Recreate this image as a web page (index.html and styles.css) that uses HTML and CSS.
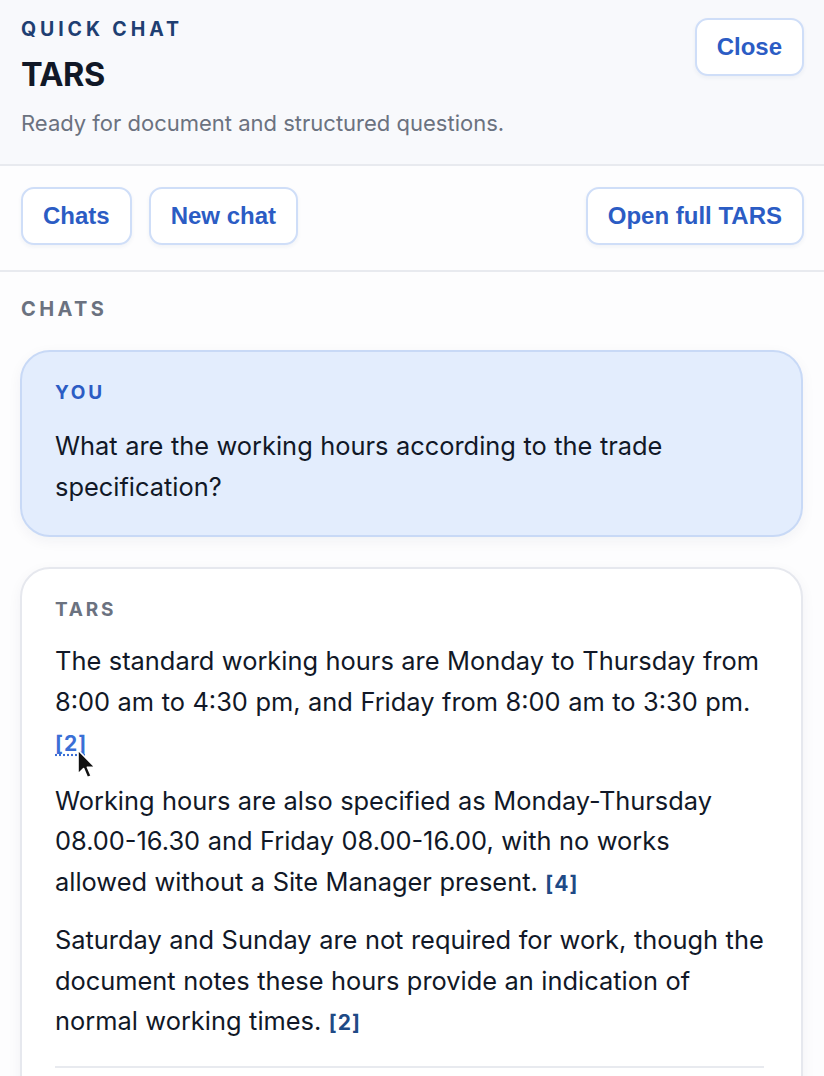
FILE: index.html
```html
<!DOCTYPE html>
<html lang="en">
<head>
    <meta charset="UTF-8">
    <meta name="viewport" content="width=device-width, initial-scale=1.0">
    <title>Quick chat - TARS</title>
    <link rel="stylesheet" href="styles.css">
</head>
<body>
    <div class="panel">
        <div class="header">
            <div class="header-text">
                <div class="eyebrow">Quick chat</div>
                <h1 class="title">TARS</h1>
                <p class="subtitle">Ready for document and structured questions.</p>
            </div>
            <button class="btn">Close</button>
        </div>
        <div class="toolbar">
            <button class="btn">Chats</button>
            <button class="btn">New chat</button>
            <button class="btn push-right">Open full TARS</button>
        </div>
        <div class="chats">
            <div class="section-label">Chats</div>
            <div class="message user">
                <div class="msg-label">You</div>
                <p>What are the working hours according to the trade specification?</p>
            </div>
            <div class="message bot">
                <div class="msg-label">Tars</div>
                <p class="has-cursor">The standard working hours are Monday to Thursday from 8:00 am to 4:30 pm, and Friday from 8:00 am to 3:30 pm.<br><a class="cite hovered" href="#">[2]</a>
                    <!-- mouse pointer over the hovered citation -->
                    <svg class="cursor" width="22" height="32" viewBox="0 0 22 32"><path d="M2 1 L2 25 L7.6 19.6 L11.4 28.6 L15.2 27 L11.4 18.2 L19 18.2 Z" fill="#111" stroke="#fff" stroke-width="1.6" stroke-linejoin="round"/></svg>
                </p>
                <p>Working hours are also specified as Monday-Thursday 08.00-16.30 and Friday 08.00-16.00, with no works allowed without a Site Manager present. <a class="cite" href="#">[4]</a></p>
                <p>Saturday and Sunday are not required for work, though the document notes these hours provide an indication of normal working times. <a class="cite" href="#">[2]</a></p>
                <div class="msg-rule"></div>
            </div>
        </div>
    </div>
</body>
</html>
```

FILE: styles.css
```css
body {
    margin: 0;
    padding: 0;
    font-family: 'Inter', 'Noto Sans', sans-serif;
    color: #111827;
    background: #fdfdfe;
}
.panel {
    width: 824px;
    height: 1076px;
    overflow: hidden;
}
.header {
    display: flex;
    justify-content: space-between;
    align-items: flex-start;
    padding: 17px 20px 0 21px;
    height: 147px;
    background: #f8f9fc;
    border-bottom: 2px solid #e8eaef;
}
.header .btn {
    margin-top: 1px;
}
.eyebrow {
    font-size: 19.5px;
    line-height: 24px;
    font-weight: 700;
    letter-spacing: 3.9px;
    text-transform: uppercase;
    color: #1f3f72;
}
.title {
    margin: 14px 0 0;
    font-size: 32.5px;
    line-height: 40px;
    font-weight: 700;
    color: #111827;
    letter-spacing: -0.5px;
}
.subtitle {
    margin: 15px 0 0;
    font-size: 22px;
    line-height: 27px;
    color: #6b7280;
}
.btn {
    font-family: 'Liberation Sans', Arial, sans-serif;
    font-size: 24px;
    font-weight: 700;
    color: #2b5cc4;
    background: #ffffff;
    border: 2px solid #cfdef8;
    border-radius: 13px;
    height: 58px;
    padding: 0 20px;
    cursor: pointer;
    box-shadow: 0 2px 4px rgba(30, 60, 120, 0.06);
}
.toolbar {
    display: flex;
    gap: 17px;
    padding: 21px 20px 25px 21px;
    border-bottom: 2px solid #e8eaef;
}
.push-right {
    margin-left: auto;
}
.chats {
    padding: 25px 21px 0 20px;
}
.section-label {
    font-size: 20px;
    line-height: 24px;
    font-weight: 700;
    letter-spacing: 3.4px;
    text-transform: uppercase;
    color: #6b7280;
    padding-left: 1px;
}
.message {
    border-radius: 30px;
    padding: 29px 37px 28px 33px;
    margin-top: 29px;
    box-shadow: 0 4px 14px rgba(20, 40, 80, 0.05);
}
.msg-label {
    font-size: 19px;
    line-height: 23px;
    font-weight: 700;
    letter-spacing: 2.8px;
    text-transform: uppercase;
    color: #6b7280;
}
.message p {
    margin: 16px 0 0;
    font-size: 25.4px;
    line-height: 40.5px;
    word-spacing: 0.4px;
}
.message .msg-label + p {
    margin-top: 20px;
}
.user {
    background: #e3edfd;
    border: 2px solid #c8d9f6;
}
.user .msg-label {
    color: #2b5cc4;
}
.user .msg-label + p {
    margin-top: 22px;
}
.bot {
    background: #ffffff;
    border: 2px solid #e6e8ee;
    margin-top: 30px;
}
.cite {
    font-size: 21px;
    font-weight: 700;
    color: #1f4a86;
    text-decoration: none;
    letter-spacing: 1px;
    word-spacing: 0;
}
.cite.hovered {
    color: #3b6fd6;
    text-decoration: underline;
    text-decoration-style: dotted;
    text-underline-offset: 3px;
}
.has-cursor {
    position: relative;
}
.cursor {
    position: absolute;
    left: 21px;
    top: 108px;
}
.msg-rule {
    margin-top: 22px;
    border-top: 2px solid #e8eaef;
    height: 60px;
}
```
